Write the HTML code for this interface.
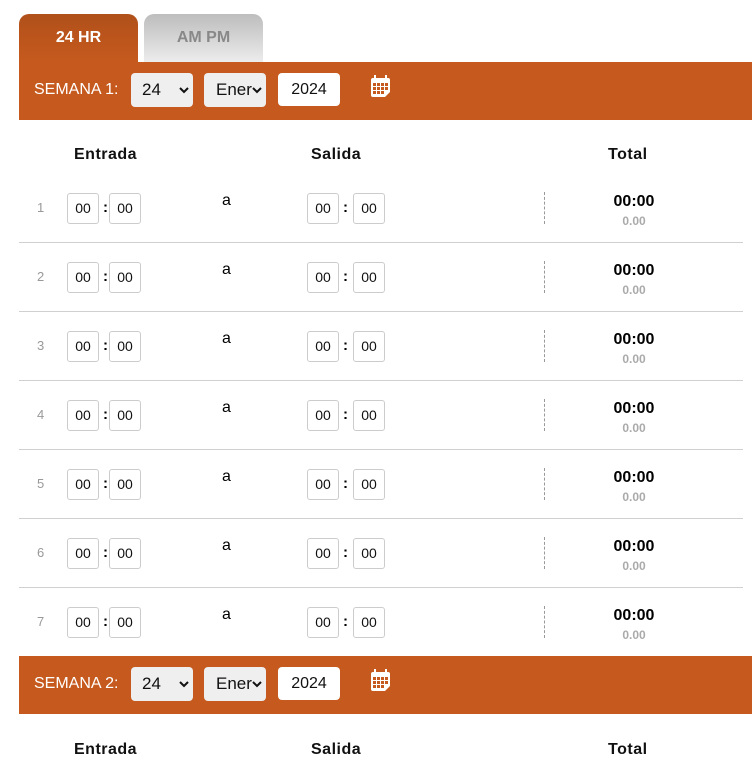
<!DOCTYPE html>
<html><head><meta charset="utf-8"><style>
*{box-sizing:border-box;margin:0;padding:0}
body{width:752px;height:778px;background:#fff;font-family:"Liberation Sans",sans-serif;position:relative;overflow:hidden}
.abs{position:absolute}
.tab{position:absolute;top:14px;height:48px;width:119px;border-radius:10px 10px 0 0;text-align:center;font-weight:bold;font-size:16px;line-height:48px}
.t1{left:19px;background:linear-gradient(#b0501a,#c65a1e);color:#fff}
.t2{left:144px;background:linear-gradient(#bdbdbd,#ececec);color:#888}
.bar{position:absolute;left:19px;width:733px;height:58px;background:#c65a1e}
.bar .lbl{position:absolute;left:15px;top:19px;color:#fff;font-size:16px}
.sel{position:absolute;top:11px;height:34px;background:#efefef;border-radius:4px;font-size:17px;line-height:34px;color:#111}
.sel svg{position:absolute;right:4px;top:13px}
.yr{position:absolute;left:259px;top:11px;width:62px;height:33px;background:#fff;border-radius:4px;font-size:16px;line-height:33px;text-align:center;color:#111}
.hd{position:absolute;font-weight:bold;font-size:16px;letter-spacing:.5px;color:#111}
.row{position:absolute;left:19px;width:724px;height:70px;border-bottom:1px solid #d0d0d0}
.n{position:absolute;left:18px;top:27px;color:#999;font-size:13px}
.in{position:absolute;top:20px;width:32px;height:31px;border:1px solid #ccc;border-radius:3px;font-size:14px;text-align:center;line-height:29px;color:#111}
.c{position:absolute;top:26px;font-weight:bold;font-size:15px}
.a{position:absolute;left:203px;top:19px;font-size:16px}
.d{position:absolute;left:525px;top:19px;height:32px;border-left:1px dashed #999}
.tt{position:absolute;left:575px;width:80px;text-align:center;top:20px;font-weight:bold;font-size:16px}
.ts{position:absolute;left:575px;width:80px;text-align:center;top:41px;font-weight:bold;font-size:12px;color:#aaa}
</style></head><body>
<div class="tab t1">24 HR</div><div class="tab t2">AM PM</div>
<div class="bar" style="top:62px">
<div class="lbl">SEMANA 1:</div>
<div class="sel" style="left:112px;width:62px;padding-left:11px">24<svg width="10" height="8" viewBox="0 0 10 8"><path d="M1 2 L5 6 L9 2" stroke="#111" stroke-width="2" fill="none"/></svg></div>
<div class="sel" style="left:185px;width:62px;padding-left:12px">Ener<svg width="10" height="8" viewBox="0 0 10 8"><path d="M1 2 L5 6 L9 2" stroke="#111" stroke-width="2" fill="none"/></svg></div>
<div class="yr">2024</div>
<svg class="abs" style="left:351px;top:13px" width="21" height="23" viewBox="0 0 21 23"><rect x="1" y="3" width="19" height="19" rx="2" fill="#fff"/><rect x="4" y="0" width="2" height="5" fill="#fff"/><rect x="15" y="0" width="2" height="5" fill="#fff"/><g fill="#c65a1e"><rect x="3" y="8" width="3" height="3"/><rect x="7" y="8" width="3" height="3"/><rect x="11" y="8" width="3" height="3"/><rect x="15" y="8" width="3" height="3"/><rect x="3" y="12" width="3" height="3"/><rect x="7" y="12" width="3" height="3"/><rect x="11" y="12" width="3" height="3"/><rect x="15" y="12" width="3" height="3"/><rect x="3" y="16" width="3" height="3"/><rect x="7" y="16" width="3" height="3"/><rect x="11" y="16" width="3" height="3"/><path d="M15 22 L20 17 L20 22Z"/></g></svg>
</div>
<div class="hd" style="left:74px;top:146px">Entrada</div><div class="hd" style="left:311px;top:146px">Salida</div><div class="hd" style="left:608px;top:146px">Total</div>
<div class="bar" style="top:656px">
<div class="lbl">SEMANA 2:</div>
<div class="sel" style="left:112px;width:62px;padding-left:11px">24<svg width="10" height="8" viewBox="0 0 10 8"><path d="M1 2 L5 6 L9 2" stroke="#111" stroke-width="2" fill="none"/></svg></div>
<div class="sel" style="left:185px;width:62px;padding-left:12px">Ener<svg width="10" height="8" viewBox="0 0 10 8"><path d="M1 2 L5 6 L9 2" stroke="#111" stroke-width="2" fill="none"/></svg></div>
<div class="yr">2024</div>
<svg class="abs" style="left:351px;top:13px" width="21" height="23" viewBox="0 0 21 23"><rect x="1" y="3" width="19" height="19" rx="2" fill="#fff"/><rect x="4" y="0" width="2" height="5" fill="#fff"/><rect x="15" y="0" width="2" height="5" fill="#fff"/><g fill="#c65a1e"><rect x="3" y="8" width="3" height="3"/><rect x="7" y="8" width="3" height="3"/><rect x="11" y="8" width="3" height="3"/><rect x="15" y="8" width="3" height="3"/><rect x="3" y="12" width="3" height="3"/><rect x="7" y="12" width="3" height="3"/><rect x="11" y="12" width="3" height="3"/><rect x="15" y="12" width="3" height="3"/><rect x="3" y="16" width="3" height="3"/><rect x="7" y="16" width="3" height="3"/><rect x="11" y="16" width="3" height="3"/><path d="M15 22 L20 17 L20 22Z"/></g></svg>
</div>
<div class="hd" style="left:74px;top:741px">Entrada</div><div class="hd" style="left:311px;top:741px">Salida</div><div class="hd" style="left:608px;top:741px">Total</div>

<div class="row" style="top:173px"><div class="n">1</div><div class="in" style="left:48px">00</div><div class="c" style="left:84px">:</div><div class="in" style="left:90px">00</div><div class="a">a</div><div class="in" style="left:288px">00</div><div class="c" style="left:324px">:</div><div class="in" style="left:334px">00</div><div class="d"></div><div class="tt">00:00</div><div class="ts">0.00</div></div>
<div class="row" style="top:242px"><div class="n">2</div><div class="in" style="left:48px">00</div><div class="c" style="left:84px">:</div><div class="in" style="left:90px">00</div><div class="a">a</div><div class="in" style="left:288px">00</div><div class="c" style="left:324px">:</div><div class="in" style="left:334px">00</div><div class="d"></div><div class="tt">00:00</div><div class="ts">0.00</div></div>
<div class="row" style="top:311px"><div class="n">3</div><div class="in" style="left:48px">00</div><div class="c" style="left:84px">:</div><div class="in" style="left:90px">00</div><div class="a">a</div><div class="in" style="left:288px">00</div><div class="c" style="left:324px">:</div><div class="in" style="left:334px">00</div><div class="d"></div><div class="tt">00:00</div><div class="ts">0.00</div></div>
<div class="row" style="top:380px"><div class="n">4</div><div class="in" style="left:48px">00</div><div class="c" style="left:84px">:</div><div class="in" style="left:90px">00</div><div class="a">a</div><div class="in" style="left:288px">00</div><div class="c" style="left:324px">:</div><div class="in" style="left:334px">00</div><div class="d"></div><div class="tt">00:00</div><div class="ts">0.00</div></div>
<div class="row" style="top:449px"><div class="n">5</div><div class="in" style="left:48px">00</div><div class="c" style="left:84px">:</div><div class="in" style="left:90px">00</div><div class="a">a</div><div class="in" style="left:288px">00</div><div class="c" style="left:324px">:</div><div class="in" style="left:334px">00</div><div class="d"></div><div class="tt">00:00</div><div class="ts">0.00</div></div>
<div class="row" style="top:518px"><div class="n">6</div><div class="in" style="left:48px">00</div><div class="c" style="left:84px">:</div><div class="in" style="left:90px">00</div><div class="a">a</div><div class="in" style="left:288px">00</div><div class="c" style="left:324px">:</div><div class="in" style="left:334px">00</div><div class="d"></div><div class="tt">00:00</div><div class="ts">0.00</div></div>
<div class="row" style="top:587px;border-bottom:none"><div class="n">7</div><div class="in" style="left:48px">00</div><div class="c" style="left:84px">:</div><div class="in" style="left:90px">00</div><div class="a">a</div><div class="in" style="left:288px">00</div><div class="c" style="left:324px">:</div><div class="in" style="left:334px">00</div><div class="d"></div><div class="tt">00:00</div><div class="ts">0.00</div></div>
</body></html>
